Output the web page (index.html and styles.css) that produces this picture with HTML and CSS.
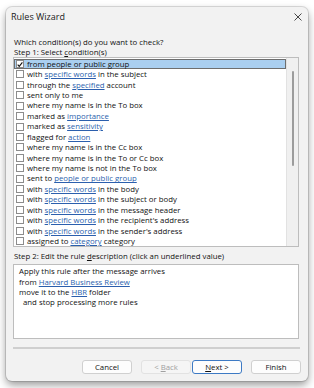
FILE: index.html
```html
<!DOCTYPE html>
<html>
<head>
<meta charset="utf-8">
<link rel="stylesheet" href="styles.css">
</head>
<body>
<div class="dialog">
  <div class="titlebar">
    <span class="title">Rules Wizard</span>
    <svg class="close" width="8" height="8" viewBox="0 0 8 8"><path d="M0.5 0.5 L7.5 7.5 M7.5 0.5 L0.5 7.5" stroke="#333" stroke-width="0.9" fill="none"/></svg>
  </div>
  <div class="content">
    <div class="line">Which condition(s) do you want to check?</div>
    <div class="line">Step 1: Select <u>c</u>ondition(s)</div>
    <div class="listbox">
      <div class="rows">
        <div class="row selected"><span class="cb checked"><svg width="7" height="7" viewBox="0 0 7 7"><path d="M0.8 3.6 L2.6 5.6 L6.3 1" stroke="#111" stroke-width="1.3" fill="none"/></svg></span><span>from people or public group</span></div>
        <div class="row"><span class="cb"></span><span>with <a>specific words</a> in the subject</span></div>
        <div class="row"><span class="cb"></span><span>through the <a>specified</a> account</span></div>
        <div class="row"><span class="cb"></span><span>sent only to me</span></div>
        <div class="row"><span class="cb"></span><span>where my name is in the To box</span></div>
        <div class="row"><span class="cb"></span><span>marked as <a>importance</a></span></div>
        <div class="row"><span class="cb"></span><span>marked as <a>sensitivity</a></span></div>
        <div class="row"><span class="cb"></span><span>flagged for <a>action</a></span></div>
        <div class="row"><span class="cb"></span><span>where my name is in the Cc box</span></div>
        <div class="row"><span class="cb"></span><span>where my name is in the To or Cc box</span></div>
        <div class="row"><span class="cb"></span><span>where my name is not in the To box</span></div>
        <div class="row"><span class="cb"></span><span>sent to <a>people or public group</a></span></div>
        <div class="row"><span class="cb"></span><span>with <a>specific words</a> in the body</span></div>
        <div class="row"><span class="cb"></span><span>with <a>specific words</a> in the subject or body</span></div>
        <div class="row"><span class="cb"></span><span>with <a>specific words</a> in the message header</span></div>
        <div class="row"><span class="cb"></span><span>with <a>specific words</a> in the recipient's address</span></div>
        <div class="row"><span class="cb"></span><span>with <a>specific words</a> in the sender's address</span></div>
        <div class="row"><span class="cb"></span><span>assigned to <a>category</a> category</span></div>
      </div>
      <div class="scrollbar"><div class="thumb"></div></div>
    </div>
    <div class="line step2">Step 2: Edit the rule <u>d</u>escription (click an underlined value)</div>
    <div class="desc">
      <div class="dline">Apply this rule after the message arrives</div>
      <div class="dline">from <a>Harvard Business Review</a></div>
      <div class="dline">move it to the <a>HBR</a> folder</div>
      <div class="dline indent">and stop processing more rules</div>
    </div>
  </div>
  <div class="sep"></div>
  <div class="buttons">
    <button class="btn">Cancel</button>
    <button class="btn disabled">&lt; <u>B</u>ack</button>
    <button class="btn default"><u>N</u>ext &gt;</button>
    <button class="btn finish">Finish</button>
  </div>
</div>
</body>
</html>
```
FILE: styles.css
```css
html, body {
  margin: 0;
  padding: 0;
  background: #ffffff;
}
body {
  width: 314px;
  height: 388px;
  overflow: hidden;
  font-family: "Open Sans", "Noto Sans", sans-serif;
  font-size: 7.8px;
  color: #111111;
}
.dialog {
  margin: 7px 0 0 6px;
  width: 302px;
  height: 374px;
  background: #f2f2f2;
  border-radius: 6px;
  box-shadow: 0 4px 9px rgba(0, 0, 0, 0.4), 0 0 0 1px rgba(0, 0, 0, 0.12);
  display: flex;
  flex-direction: column;
}
.titlebar {
  height: 19px;
  display: flex;
  align-items: center;
  justify-content: space-between;
  padding: 0 6px 0 5px;
}
.title {
  font-size: 9px;
  color: #1a1a1a;
}
.close {
  display: block;
}
.content {
  padding: 10.5px 9px 0 7px;
  display: flex;
  flex-direction: column;
}
.line {
  line-height: 10px;
  height: 10px;
  padding-left: 1px;
  white-space: nowrap;
}
u {
  text-decoration: underline;
  text-underline-offset: 1px;
}
.listbox {
  height: 188px;
  border: 1px solid #bdbdbd;
  background: #ffffff;
  display: flex;
  margin-top: 0.3px;
}
.rows {
  flex: 1;
  padding-top: 1px;
}
.row {
  height: 10.43px;
  line-height: 10.43px;
  display: flex;
  align-items: center;
  gap: 3px;
  padding-left: 2px;
  white-space: nowrap;
  box-sizing: border-box;
}
.row.selected {
  background: #aacff0;
  border: 1px solid #6e6e6e;
  padding-left: 1px;
}
.cb {
  width: 8px;
  height: 8px;
  border: 1px solid #8c8c8c;
  background: #ffffff;
  box-sizing: border-box;
  flex: none;
  display: flex;
  align-items: center;
  justify-content: center;
}
.cb svg {
  display: block;
}
a {
  color: #2b5fad;
  text-decoration: underline;
  text-underline-offset: 1px;
}
.scrollbar {
  width: 12px;
  background: #f0f0f0;
  border-left: 1px solid #e2e2e2;
  display: flex;
  justify-content: center;
  padding-top: 13px;
  box-sizing: border-box;
}
.thumb {
  width: 2px;
  height: 95px;
  background: #9c9c9c;
  border-radius: 1px;
}
.step2 {
  margin-top: 4.5px;
}
.desc {
  margin-top: 2.5px;
  height: 75.5px;
  box-sizing: border-box;
  border: 1px solid #bdbdbd;
  background: #ffffff;
  padding: 1.5px 0 0 5px;
}
.dline {
  line-height: 10.3px;
  height: 10.3px;
  white-space: nowrap;
}
.dline.indent {
  padding-left: 4px;
}
.sep {
  margin: 8px 0 0 7px;
  width: 287px;
  height: 2px;
  background: #cfcfcf;
}
.buttons {
  display: flex;
  justify-content: flex-end;
  padding: 10.5px 7px 0 0;
  gap: 0;
}
.btn {
  width: 50px;
  height: 14px;
  padding: 0;
  margin: 0;
  font-family: inherit;
  font-size: 7.8px;
  line-height: 12px;
  color: #111111;
  background: #fdfdfd;
  border: 1px solid #d0d0d0;
  border-radius: 3px;
  box-sizing: border-box;
  margin-left: 9px;
}
.btn.disabled {
  color: #a0a0a0;
  background: #f5f5f5;
  border-color: #e2e2e2;
}
.btn.default {
  margin-left: 1px;
  border-color: #3d7ac4;
}
```
